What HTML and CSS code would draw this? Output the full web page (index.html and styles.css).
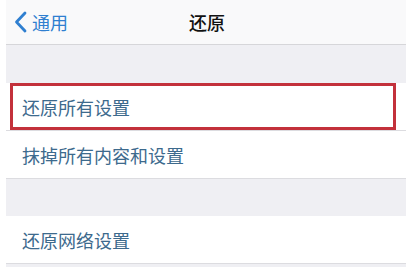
FILE: index.html
```html
<!DOCTYPE html>
<html lang="zh-CN">
<head>
    <meta charset="UTF-8">
    <meta name="viewport" content="width=device-width, initial-scale=1.0">
    <title>还原</title>
    <link rel="stylesheet" href="styles.css">
</head>
<body>
    <div class="screen">
        <div class="navbar">
            <a href="#" class="back">
                <svg class="chevron" width="13" height="22" viewBox="0 0 13 22">
                    <path d="M11 2 L2.5 11 L11 20" fill="none" stroke="#2f7fd0" stroke-width="2.8" stroke-linecap="round" stroke-linejoin="round"/>
                </svg>
                <span>通用</span>
            </a>
            <div class="title">还原</div>
        </div>

        <div class="group first">
            <div class="row marked">还原所有设置</div>
            <div class="row">抹掉所有内容和设置</div>
        </div>

        <div class="group second">
            <div class="row">还原网络设置</div>
        </div>
    </div>
</body>
</html>
```

FILE: styles.css
```css
body {
    margin: 0;
    padding: 0;
    background-color: #ffffff;
    font-family: "Noto Sans CJK SC", "Noto Sans", sans-serif;
}

.screen {
    margin-left: 6px;
    height: 267px;
    overflow: hidden;
    background-color: #efeff3;
}

/* Top navigation bar */
.navbar {
    position: relative;
    height: 44px;
    display: flex;
    align-items: center;
    justify-content: center;
    background-color: #f9f9fa;
    border-bottom: 1px solid #d6d6d9;
}

.back {
    position: absolute;
    left: 8px;
    top: 0;
    height: 44px;
    display: flex;
    align-items: center;
    gap: 5px;
    color: #2f7fd0;
    font-size: 18px;
    text-decoration: none;
}

.title {
    font-size: 18px;
    font-weight: 500;
    color: #111111;
    margin-left: 2px;
}

/* Settings groups */
.group {
    background-color: #ffffff;
}

.group.first {
    margin-top: 38px;
}

.group.second {
    margin-top: 37px;
}

.row {
    position: relative;
    height: 47px;
    display: flex;
    align-items: center;
    padding-left: 16px;
    font-size: 18px;
    color: #3d6a8d;
    border-bottom: 1px solid #dcdce0;
}

/* red annotation frame */
.row.marked::after {
    content: "";
    position: absolute;
    left: 4px;
    right: 10px;
    top: 0;
    bottom: 0;
    border: 3px solid #c3313b;
}
```
